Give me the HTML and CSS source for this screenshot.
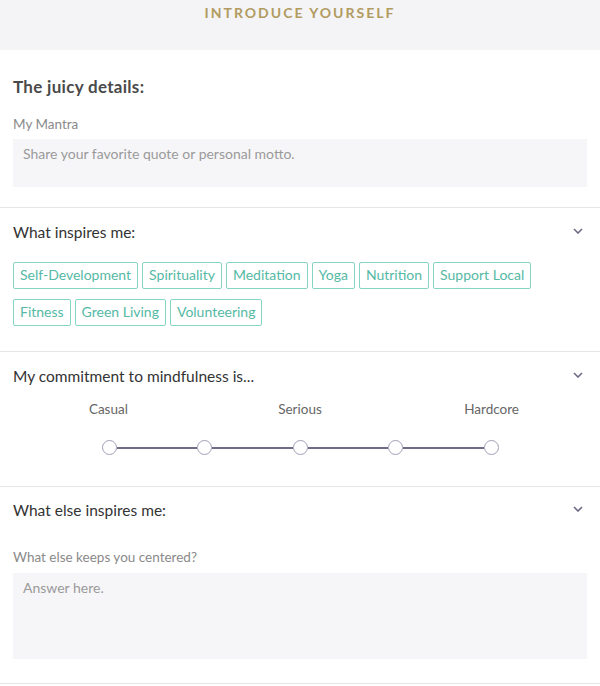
FILE: index.html
```html
<!DOCTYPE html>
<html lang="en">
<head>
    <meta charset="UTF-8">
    <meta name="viewport" content="width=device-width, initial-scale=1.0">
    <title>Introduce Yourself</title>
    <link rel="stylesheet" href="styles.css">
</head>
<body>
    <div class="topbar">
        <h1>Introduce Yourself</h1>
    </div>

    <div class="section details-section">
        <h2 class="title">The juicy details:</h2>
        <label class="field-label" for="mantra">My Mantra</label>
        <textarea id="mantra" class="field short" placeholder="Share your favorite quote or personal motto."></textarea>
    </div>

    <div class="section tags-section">
        <div class="section-head">
            <h3>What inspires me:</h3>
            <svg class="chevron" viewBox="0 0 10 6" width="10" height="6"><polyline points="1,1 5,5 9,1" fill="none" stroke="#6e6a86" stroke-width="1.6"/></svg>
        </div>
        <div class="tags">
            <span class="tag">Self-Development</span>
            <span class="tag">Spirituality</span>
            <span class="tag">Meditation</span>
            <span class="tag">Yoga</span>
            <span class="tag">Nutrition</span>
            <span class="tag">Support Local</span>
            <span class="tag">Fitness</span>
            <span class="tag">Green Living</span>
            <span class="tag">Volunteering</span>
        </div>
    </div>

    <div class="section slider-section">
        <div class="section-head">
            <h3>My commitment to mindfulness is...</h3>
            <svg class="chevron" viewBox="0 0 10 6" width="10" height="6"><polyline points="1,1 5,5 9,1" fill="none" stroke="#6e6a86" stroke-width="1.6"/></svg>
        </div>
        <div class="scale-labels">
            <span>Casual</span>
            <span></span>
            <span>Serious</span>
            <span></span>
            <span>Hardcore</span>
        </div>
        <div class="slider">
            <span class="dot"></span><span class="track"></span>
            <span class="dot"></span><span class="track"></span>
            <span class="dot"></span><span class="track"></span>
            <span class="dot"></span><span class="track"></span>
            <span class="dot"></span>
        </div>
    </div>

    <div class="section last-section">
        <div class="section-head">
            <h3>What else inspires me:</h3>
            <svg class="chevron" viewBox="0 0 10 6" width="10" height="6"><polyline points="1,1 5,5 9,1" fill="none" stroke="#6e6a86" stroke-width="1.6"/></svg>
        </div>
        <label class="field-label" for="centered">What else keeps you centered?</label>
        <textarea id="centered" class="field tall" placeholder="Answer here."></textarea>
    </div>
</body>
</html>
```

FILE: styles.css
```css
body {
    font-family: 'Lato', 'Open Sans', sans-serif;
    background-color: #fff;
    color: #333;
    margin: 0;
    padding: 0;
}
.topbar {
    background-color: #f4f4f6;
    height: 50px;
    padding-top: 5px;
    box-sizing: border-box;
}
.topbar h1 {
    margin: 0;
    text-align: center;
    font-size: 14px;
    line-height: 16px;
    font-weight: 700;
    letter-spacing: 2px;
    text-transform: uppercase;
    color: #b19b60;
}
.section {
    padding: 14px 13px 24px;
    border-bottom: 1px solid #e6e6e8;
}
.details-section {
    padding-top: 27px;
    padding-bottom: 20px;
}
.title {
    margin: 0 0 19px;
    font-size: 17px;
    line-height: 20px;
    font-weight: 700;
    letter-spacing: 0.3px;
    color: #4a4a4a;
}
.section-head {
    display: flex;
    justify-content: space-between;
    align-items: center;
    height: 20px;
}
.section-head h3 {
    margin: 0;
    font-size: 15.5px;
    font-weight: 400;
    color: #333;
}
.chevron {
    margin-right: 4px;
    margin-top: -3px;
}
.field-label {
    display: block;
    font-size: 13.5px;
    line-height: 16px;
    color: #8a8a8a;
    margin-bottom: 7px;
}
.field {
    display: block;
    width: 100%;
    box-sizing: border-box;
    border: none;
    outline: none;
    resize: none;
    background-color: #f6f6f8;
    padding: 6px 10px;
    font-family: inherit;
    font-size: 14px;
    line-height: 18px;
    color: #555;
}
.field::placeholder {
    color: #9a9a9a;
}
.short {
    height: 48px;
}
.tall {
    height: 86px;
}
.tags-section {
    padding-bottom: 25px;
}
.tags {
    display: flex;
    flex-wrap: wrap;
    gap: 10px 4px;
    margin-top: 20px;
}
.tag {
    height: 27px;
    box-sizing: border-box;
    border: 1.5px solid #86d4c4;
    border-radius: 2px;
    padding: 0 6px;
    font-size: 14px;
    line-height: 24px;
    color: #55b9a5;
}
.slider-section {
    padding-bottom: 31px;
}
.scale-labels {
    display: grid;
    grid-template-columns: repeat(5, 1fr);
    width: 479px;
    margin: 15px auto 0;
    font-size: 13.5px;
    line-height: 16px;
    color: #666;
    text-align: center;
}
.slider {
    display: flex;
    align-items: center;
    width: 397px;
    margin: 23px auto 0;
}
.dot {
    width: 15px;
    height: 15px;
    box-sizing: border-box;
    border: 1.5px solid #a29eb7;
    border-radius: 50%;
    background-color: #fff;
}
.track {
    flex: 1;
    height: 2px;
    background-color: #6f6c86;
}
.last-section {
    padding-top: 13px;
}
.last-section .field-label {
    margin-top: 29px;
    margin-bottom: 8px;
}
```
